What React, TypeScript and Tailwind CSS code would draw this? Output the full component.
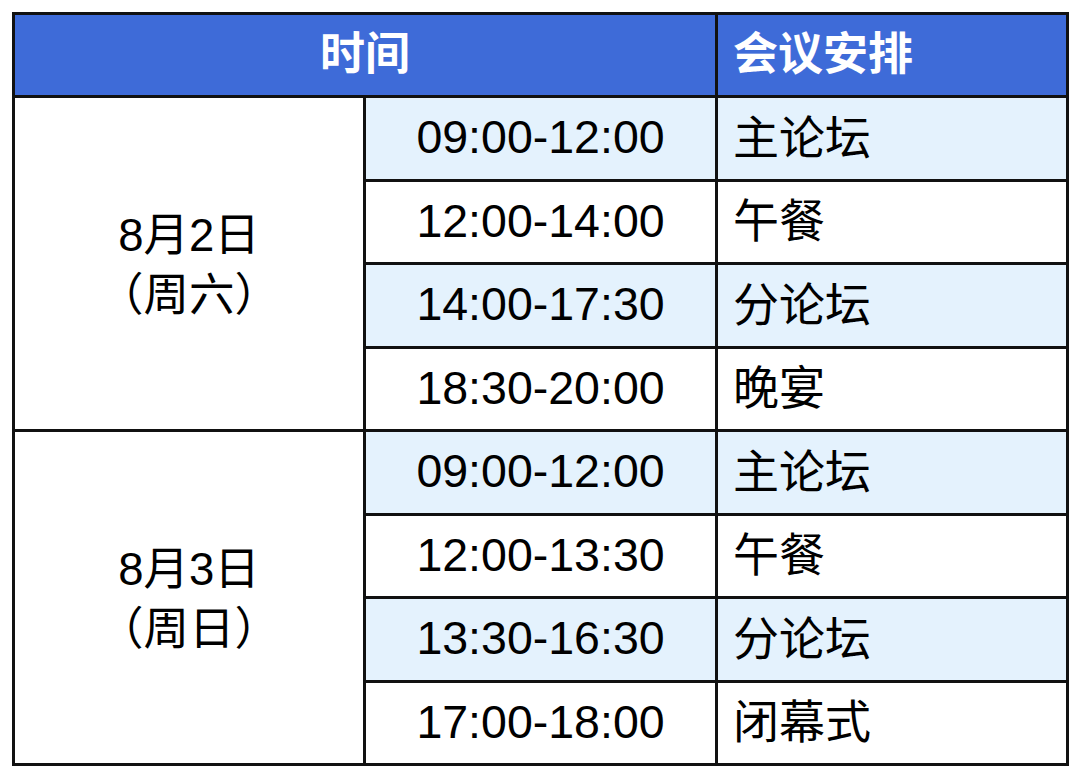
const days = [
  {
    date: '8月2日',
    week: '（周六）',
    rows: [
      ['09:00-12:00', '主论坛'],
      ['12:00-14:00', '午餐'],
      ['14:00-17:30', '分论坛'],
      ['18:30-20:00', '晚宴'],
    ],
  },
  {
    date: '8月3日',
    week: '（周日）',
    rows: [
      ['09:00-12:00', '主论坛'],
      ['12:00-13:30', '午餐'],
      ['13:30-16:30', '分论坛'],
      ['17:00-18:00', '闭幕式'],
    ],
  },
]

export default function App() {
  return (
    <div
      className="w-[1080px] h-[780px] bg-white pt-[12px] pl-[12px]"
      style={{ fontFamily: '"Liberation Sans", "Noto Sans CJK SC", sans-serif' }}
    >
      <div className="grid w-[1057px] grid-cols-[348px_349px_348px] grid-rows-[80px_repeat(8,80.5px)] gap-[3px] p-[3px] bg-[#111]">
        {/* Header */}
        <div className="col-span-2 bg-[#3e6bd8] flex items-center justify-center text-white text-[45px] font-bold">
          时间
        </div>
        <div className="bg-[#3e6bd8] flex items-center pl-[15px] text-white text-[45px] font-bold">
          会议安排
        </div>

        {days.map((day) => (
          <div key={day.date} className="contents">
            <div className="row-span-4 bg-white flex flex-col items-center justify-center text-[45.5px] leading-[60px] text-black pt-[4px]">
              <span>{day.date}</span>
              <span>{day.week}</span>
            </div>
            {day.rows.map(([time, item], i) => (
              <div key={time} className="contents">
                <div
                  className={`${i % 2 === 0 ? 'bg-[#e4f2fd]' : 'bg-white'} col-start-2 flex items-center justify-center text-[46.5px] text-black`}
                >
                  {time}
                </div>
                <div
                  className={`${i % 2 === 0 ? 'bg-[#e4f2fd]' : 'bg-white'} col-start-3 flex items-center pl-[15px] text-[46px] text-black`}
                >
                  {item}
                </div>
              </div>
            ))}
          </div>
        ))}
      </div>
    </div>
  )
}
